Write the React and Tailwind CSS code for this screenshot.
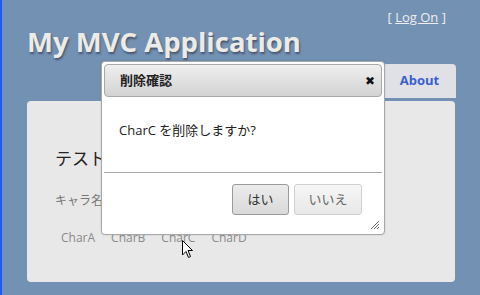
import React from 'react';

const font = { fontFamily: '"Open Sans", "Noto Sans CJK JP", sans-serif' };

const chars = ['CharA', 'CharB', 'CharC', 'CharD'];

const Cursor = () => (
  <svg className="absolute left-[180px] top-[240px]" width="12" height="19" viewBox="0 0 12 19">
    <path d="M0.5 0.5 L0.5 15 L4 11.5 L6.5 17.5 L8.5 16.5 L6 10.5 L10.5 10.5 Z" fill="#fff" stroke="#000" strokeWidth="1" strokeLinejoin="round" />
  </svg>
);

const ConfirmDialog = () => (
  <div className="absolute left-[99px] top-[61px] w-[284px] h-[174px] bg-white border border-[#a8a8a8] rounded-[4px] p-[2px] flex flex-col shadow-[0_0_2px_rgba(0,0,0,0.15)]">
    <div className="h-[33px] flex items-center justify-between pl-[15px] pr-[6px] rounded-[4px] border border-[#a9a9a9] bg-gradient-to-b from-[#efefef] to-[#d3d3d3]">
      <span className="text-[13px] font-bold text-[#222]">削除確認</span>
      <span className="text-[12px] text-[#111] leading-none">✖</span>
    </div>
    <div className="flex-1 px-[15px] pt-[24px] text-[13px] text-[#222]">CharC を削除しますか?</div>
    <div className="border-t border-[#aaa] h-[60px] flex justify-end items-start gap-[5px] pt-[11px] pr-[20px] relative">
      <button className="w-[57px] h-[31px] rounded-[3px] border border-[#9a9a9a] bg-gradient-to-b from-[#ececec] to-[#d9d9d9] text-[13px] text-[#333]">はい</button>
      <button className="w-[68px] h-[31px] rounded-[3px] border border-[#d0d0d0] bg-gradient-to-b from-[#f6f6f6] to-[#e8e8e8] text-[13px] text-[#666]">いいえ</button>
      <svg className="absolute right-[2px] bottom-[2px]" width="10" height="10" viewBox="0 0 10 10">
        <path d="M9 1 L1 9 M9 4 L4 9 M9 7 L7 9" stroke="#666" strokeWidth="1" />
      </svg>
    </div>
  </div>
);

const App = () => {
  return (
    <div className="relative w-[480px] h-[295px] overflow-hidden bg-[#7391b3] border-l-2 border-[#1e5bf0]" style={font}>
      <div className="flex justify-between pl-[25px] pr-[34px]">
        <h1 className="pt-[24px] text-[27.5px] font-bold text-[#ecebe6] leading-[36px] [text-shadow:1px_2px_2px_rgba(40,50,70,0.6)]">My MVC Application</h1>
        <div className="pt-[8px] text-[13px] text-[#eeeeee]">
          [ <span className="underline">Log On</span> ]
        </div>
      </div>
      <div className="flex justify-end pr-[24px] mt-[4px]">
        <div className="w-[73px] h-[34px] rounded-t-[4px] bg-[#dfe1e6] flex items-center justify-center text-[13px] font-bold text-[#3b5fcf]">About</div>
      </div>
      <div className="mx-[25px] mt-[3px] h-[181px] rounded-[4px] bg-[#e8e8e8] pl-[28px] pt-[46px]">
        <h2 className="text-[17px] text-[#222] leading-[24px]">テスト</h2>
        <p className="mt-[21px] text-[12px] text-[#777]">キャラ名</p>
        <div className="mt-[19px] pl-[6px] flex gap-[16px] text-[12px] text-[#8a8a8a]">
          {chars.map((c) => (
            <span key={c}>{c}</span>
          ))}
        </div>
      </div>
      <ConfirmDialog />
      <Cursor />
    </div>
  );
};

export default App;
